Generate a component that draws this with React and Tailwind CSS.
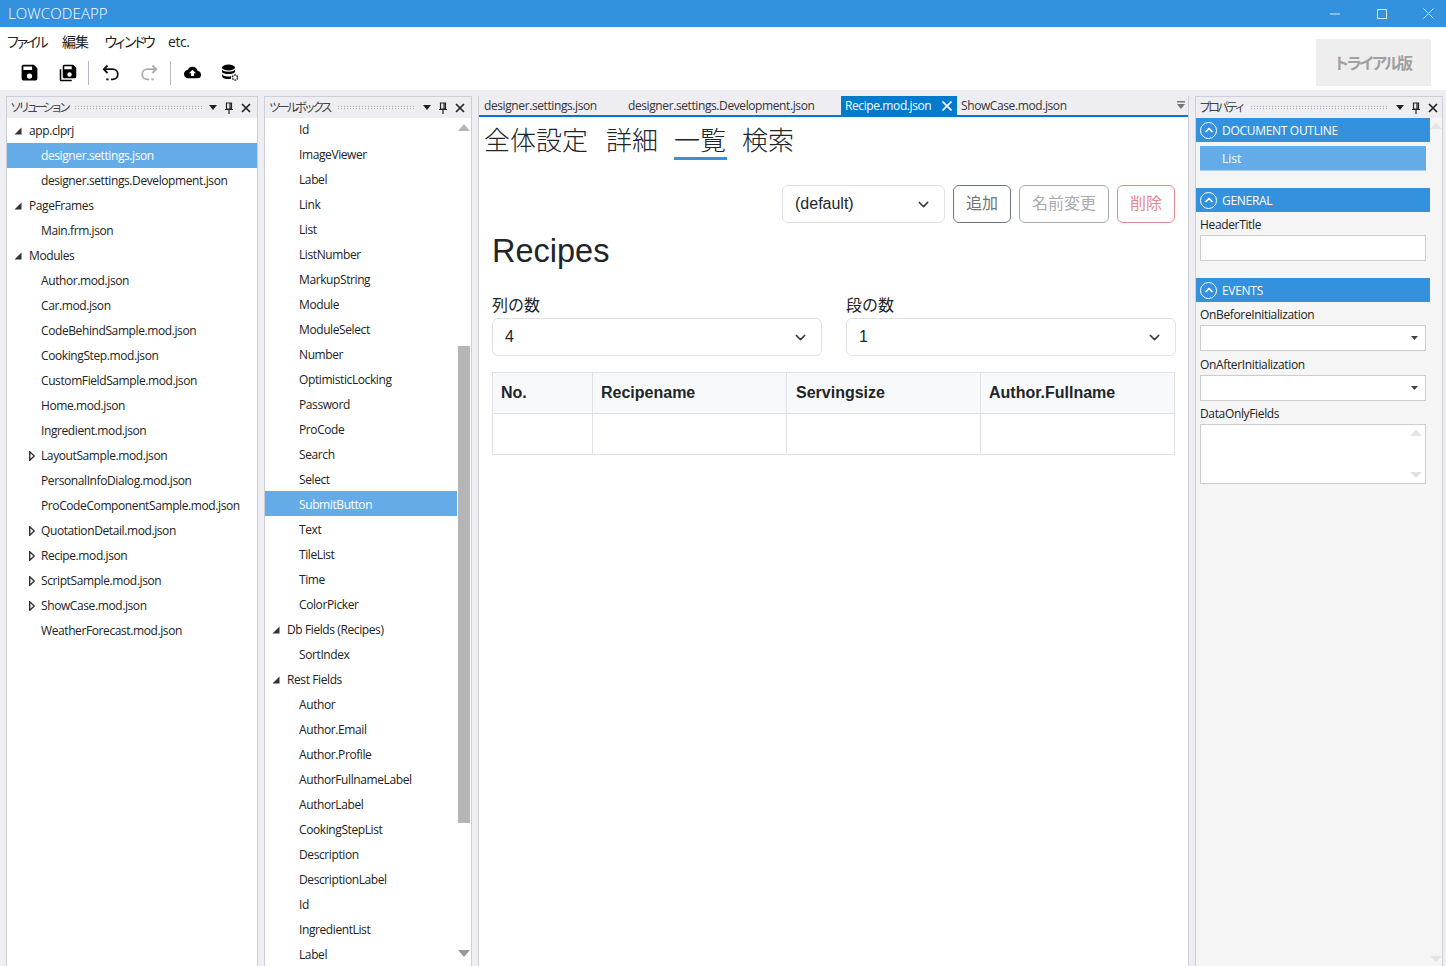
import { ChevronDown, ChevronUp } from 'lucide-react'

const uiFont = { fontFamily: '"Open Sans", "Noto Sans CJK JP", sans-serif' }

const solutionRows = [
  { label: 'app.clprj', level: 0, open: true },
  { label: 'designer.settings.json', level: 1, active: true },
  { label: 'designer.settings.Development.json', level: 1 },
  { label: 'PageFrames', level: 0, open: true },
  { label: 'Main.frm.json', level: 1 },
  { label: 'Modules', level: 0, open: true },
  { label: 'Author.mod.json', level: 1 },
  { label: 'Car.mod.json', level: 1 },
  { label: 'CodeBehindSample.mod.json', level: 1 },
  { label: 'CookingStep.mod.json', level: 1 },
  { label: 'CustomFieldSample.mod.json', level: 1 },
  { label: 'Home.mod.json', level: 1 },
  { label: 'Ingredient.mod.json', level: 1 },
  { label: 'LayoutSample.mod.json', level: 1, closed: true },
  { label: 'PersonalInfoDialog.mod.json', level: 1 },
  { label: 'ProCodeComponentSample.mod.json', level: 1 },
  { label: 'QuotationDetail.mod.json', level: 1, closed: true },
  { label: 'Recipe.mod.json', level: 1, closed: true },
  { label: 'ScriptSample.mod.json', level: 1, closed: true },
  { label: 'ShowCase.mod.json', level: 1, closed: true },
  { label: 'WeatherForecast.mod.json', level: 1 },
]

const toolboxRows = [
  'Id', 'ImageViewer', 'Label', 'Link', 'List', 'ListNumber', 'MarkupString', 'Module', 'ModuleSelect',
  'Number', 'OptimisticLocking', 'Password', 'ProCode', 'Search', 'Select', 'SubmitButton', 'Text',
  'TileList', 'Time', 'ColorPicker', '#Db Fields (Recipes)', 'SortIndex', '#Rest Fields', 'Author',
  'Author.Email', 'Author.Profile', 'AuthorFullnameLabel', 'AuthorLabel', 'CookingStepList', 'Description',
  'DescriptionLabel', 'Id', 'IngredientList', 'Label',
]

function OpenArrow() {
  return (
    <svg width="8" height="8" viewBox="0 0 8 8" className="shrink-0">
      <path d="M7.5 0.5V7.5H0.5Z" fill="#333" />
    </svg>
  )
}

function ClosedArrow() {
  return (
    <svg width="6" height="10" viewBox="0 0 6 10" className="shrink-0">
      <path d="M0.7 0.7L5.3 5L0.7 9.3Z" fill="#fff" stroke="#333" strokeWidth="1.4" />
    </svg>
  )
}

function PanelHeader({ title, titleClass, rightClass = 'pr-[6px]' }) {
  return (
    <div className={`h-[21px] shrink-0 bg-[#eeeef2] flex items-center pl-[3px] ${rightClass}`}>
      <span className={`text-[12px] text-[#444] whitespace-nowrap ${titleClass}`}>{title}</span>
      <div className="flex-1 h-[5px] mx-[7px] bg-[radial-gradient(#999_0.6px,transparent_0.7px)] bg-[length:3px_2.5px]" />
      <svg width="8" height="5" viewBox="0 0 8 5" className="mr-[8px]"><path d="M0 0H8L4 5Z" fill="#222" /></svg>
      <svg width="8" height="12" viewBox="0 0 8 12" className="mr-[8px]">
        <path d="M1.5 1H6.5V7H1.5ZM5 1V7M0 7.5H8M4 8V12" fill="none" stroke="#222" strokeWidth="1.2" />
      </svg>
      <svg width="10" height="10" viewBox="0 0 10 10"><path d="M1 1L9 9M9 1L1 9" stroke="#222" strokeWidth="1.7" /></svg>
    </div>
  )
}

function SolutionRow({ row }) {
  return (
    <div className={`h-[25px] flex items-center text-[12px] tracking-[-0.4px] ${row.active ? 'bg-[#64ace8] text-white' : 'text-[#222]'}`}>
      <span className={`shrink-0 flex items-center justify-end ${row.level === 0 ? 'w-[15px]' : 'w-[28px]'}`}>
        {row.open && <OpenArrow />}
        {row.closed && <ClosedArrow />}
      </span>
      <span className={row.level === 0 ? 'ml-[7px]' : 'ml-[6px]'}>{row.label}</span>
    </div>
  )
}

function ToolboxRow({ label }) {
  const group = label.startsWith('#')
  return (
    <div className={`h-[25px] pt-[2px] flex items-center text-[12px] tracking-[-0.4px] ${label === 'SubmitButton' ? 'bg-[#64ace8] text-white' : 'text-[#222]'}`}>
      {group ? (
        <>
          <span className="ml-[7px]"><OpenArrow /></span>
          <span className="ml-[7px]">{label.slice(1)}</span>
        </>
      ) : (
        <span className="ml-[34px]">{label}</span>
      )}
    </div>
  )
}

function SectionHeader({ title }) {
  return (
    <div className="h-[24px] bg-[#3391de] flex items-center pl-[4px] text-white text-[12px] tracking-[-0.3px]">
      <span className="w-[17px] h-[17px] rounded-full border-[1.5px] border-white flex items-center justify-center mr-[5px]">
        <ChevronUp size={12} strokeWidth={3.5} />
      </span>
      <span className="pt-[1px]">{title}</span>
    </div>
  )
}

function PropLabel({ children }) {
  return <div className="text-[12px] leading-[16px] text-[#222] tracking-[-0.35px] ml-[4px]">{children}</div>
}

function PropSelect() {
  return (
    <div className="mx-[4px] h-[26px] bg-white border border-[#ccc] flex items-center justify-end pr-[7px] mt-[2px]">
      <svg width="7" height="4" viewBox="0 0 7 4"><path d="M0 0H7L3.5 4Z" fill="#444" /></svg>
    </div>
  )
}

function WebSelect({ value, className }) {
  return (
    <div className={`h-[38px] bg-white border border-[#dee2e6] rounded-[6px] flex items-center justify-between pl-[12px] pr-[12px] text-[16px] text-[#212529] ${className}`}>
      <span>{value}</span>
      <ChevronDown size={17} strokeWidth={2} className="text-[#343a40]" />
    </div>
  )
}

function Mdi({ d, color = '#000', size = 21 }) {
  return (
    <svg width={size} height={size} viewBox="0 0 24 24"><path d={d} fill={color} /></svg>
  )
}

function UndoIcon({ flip, color }) {
  return (
    <svg width="18" height="18" viewBox="0 0 18 18" fill="none" stroke={color} strokeWidth="1.8" className={flip ? '-scale-x-100' : ''}>
      <path d="M5.5 1.5L1.8 5.2L5.5 9" />
      <path d="M2 5.2H10.5C13.6 5.2 15.8 7.4 15.8 10.3C15.8 13.2 13.6 15.4 10.5 15.4H9" />
      <path d="M4.2 15.4H6.6" />
    </svg>
  )
}

function DbIcon() {
  return (
    <svg width="18" height="18" viewBox="0 0 18 18">
      <ellipse cx="7.5" cy="3.5" rx="6.5" ry="3" fill="#000" />
      <path d="M1 5.5C2.5 8.5 12.5 8.5 14 5.5V8C12.5 10.8 2.5 10.8 1 8ZM1 10C2.5 12.8 9 13 10 12V14.8C7 15.5 2 15 1 12.5Z" fill="#000" />
      <circle cx="14" cy="13.5" r="2.6" fill="none" stroke="#333" strokeWidth="1.5" strokeDasharray="2 0.7" />
    </svg>
  )
}

function Sep() {
  return <div className="w-px h-[24px] bg-[#b4b8c4]" />
}

export default function App() {
  return (
    <div className="w-[1446px] h-[966px] overflow-hidden bg-[#eeeef2] flex flex-col" style={uiFont}>
      {/* Title bar */}
      <div className="h-[27px] shrink-0 bg-[#3391de] flex items-center pl-[8px] text-white">
        <span className="text-[15px] font-light tracking-[0.1px]">LOWCODEAPP</span>
        <div className="ml-auto flex items-center">
          <svg width="10" height="2" viewBox="0 0 10 2" className="mr-[37px]"><path d="M0 1H10" stroke="#d9ecfb" /></svg>
          <svg width="10" height="10" viewBox="0 0 10 10" className="mr-[36px]"><path d="M.5.5H9.5V9.5H.5Z" stroke="#d9ecfb" fill="none" /></svg>
          <svg width="11" height="11" viewBox="0 0 11 11" className="mr-[12px]"><path d="M.5.5L10.5 10.5M10.5.5L.5 10.5" stroke="#d9ecfb" /></svg>
        </div>
      </div>

      {/* Menu and toolbar */}
      <div className="h-[63px] shrink-0 bg-white flex">
        <div className="flex-1 flex flex-col">
          <div className="h-[30px] flex items-center pl-[6px] pb-[1px] text-[14px] text-[#222] whitespace-nowrap">
            <span className="w-[56px] tracking-[-4.4px]">ファイル</span>
            <span className="w-[42px] tracking-[-1px]">編集</span>
            <span className="w-[64px] tracking-[-4.4px]">ウィンドウ</span>
            <span className="tracking-[-0.4px]">etc.</span>
          </div>
          <div className="flex-1 flex items-center pl-[4px] pb-[2px]">
            <div className="w-[4px] h-[24px] bg-[radial-gradient(#bbb_0.6px,transparent_0.7px)] bg-[length:2px_2px]" />
            <span className="ml-[11px] flex"><Mdi d="M15,9H5V5H15M12,19A3,3 0 0,1 9,16A3,3 0 0,1 12,13A3,3 0 0,1 15,16A3,3 0 0,1 12,19M17,3H5C3.89,3 3,3.9 3,5V19A2,2 0 0,0 5,21H19A2,2 0 0,0 21,19V7L17,3Z" /></span>
            <span className="ml-[19px] flex"><Mdi size={18} d="M17,7V3H7V7H17M14,17A3,3 0 0,0 17,14A3,3 0 0,0 14,11A3,3 0 0,0 11,14A3,3 0 0,0 14,17M19,1L23,5V17A2,2 0 0,1 21,19H7C5.89,19 5,18.1 5,17V3A2,2 0 0,1 7,1H19M1,7H3V21H17V23H3A2,2 0 0,1 1,21V7Z" /></span>
            <span className="ml-[11px]"><Sep /></span>
            <span className="ml-[13px] flex"><UndoIcon color="#111" /></span>
            <span className="ml-[20px] flex"><UndoIcon flip color="#aaa" /></span>
            <span className="ml-[12px]"><Sep /></span>
            <span className="ml-[13px] flex"><Mdi size={17} d="M14,13V17H10V13H7L12,8L17,13M19.35,10.03C18.67,6.59 15.64,4 12,4C9.11,4 6.6,5.64 5.35,8.03C2.34,8.36 0,10.9 0,14A6,6 0 0,0 6,20H19A5,5 0 0,0 24,15C24,12.36 21.95,10.22 19.35,10.03Z" /></span>
            <span className="ml-[20px] flex"><DbIcon /></span>
          </div>
        </div>
        <div className="w-[115px] h-[47px] mt-[12px] mr-[15px] pr-[4px] bg-[#eeeeee] flex items-center justify-center text-[16px] font-bold text-[#a0a0a0] tracking-[-3.2px] whitespace-nowrap">
          トライアル版
        </div>
      </div>

      {/* Docked panels */}
      <div className="flex-1 min-h-0 flex pt-[6px] pl-[6px] pr-[3px] gap-[6px]">
        <div className="w-[252px] shrink-0 border-x border-t border-[#ccced8] bg-white flex flex-col overflow-hidden">
          <PanelHeader title="ソリューション" titleClass="tracking-[-3.8px]" />
          <div>
            {solutionRows.map(row => <SolutionRow key={row.label} row={row} />)}
          </div>
        </div>

        <div className="w-[208px] shrink-0 border-x border-t border-[#ccced8] bg-white flex flex-col overflow-hidden">
          <PanelHeader title="ツールボックス" titleClass="ml-px tracking-[-3.3px]" />
          <div className="flex-1 min-h-0 flex">
            <div className="w-[192px] shrink-0 -mt-[2px]">
              {toolboxRows.map((label, i) => <ToolboxRow key={i} label={label} />)}
            </div>
            <div className="w-[14px] shrink-0 flex flex-col items-center">
              <svg width="12" height="7" viewBox="0 0 12 7" className="mt-[6px]"><path d="M6 0L12 7H0Z" fill="#b5b5b5" /></svg>
              <div className="w-[12px] h-[477px] mt-[215px] -ml-[1px] bg-[#b5b5b5]" />
              <svg width="12" height="7" viewBox="0 0 12 7" className="mt-[127px]"><path d="M0 0H12L6 7Z" fill="#999" /></svg>
            </div>
          </div>
        </div>

        <div className="w-[711px] shrink-0 border-r border-l border-[#ccced8] bg-white flex flex-col overflow-hidden">
          {/* Document tabs */}
          <div className="h-[21px] shrink-0 bg-[#eeeef2] border-b-2 border-[#007acc] flex text-[12px] text-[#333] tracking-[-0.4px]">
            <span className="w-[149px] pl-[5px] pt-[1px]">designer.settings.json</span>
            <span className="w-[213px] pt-[1px]">designer.settings.Development.json</span>
            <span className="w-[116px] h-[19px] bg-[#007acc] text-white flex items-center pl-[4px]">
              Recipe.mod.json
              <svg width="10" height="10" viewBox="0 0 10 10" className="ml-auto mr-[5px]"><path d="M.5.5L9.5 9.5M9.5.5L.5 9.5" stroke="#fff" strokeWidth="1.6" /></svg>
            </span>
            <span className="pl-[4px] pt-[1px]">ShowCase.mod.json</span>
            <svg width="10" height="8" viewBox="0 0 10 8" className="ml-auto mr-[2px] mt-[5px]"><path d="M1 0H9V1.5H1ZM1 3H9L5 8Z" fill="#777" /></svg>
          </div>

          <div className="flex-1 pl-[5px] pr-[13px]" style={{ fontFamily: '"Liberation Sans", "Noto Sans CJK JP", sans-serif' }}>
            <div className="flex text-[26px] leading-[40px] font-light text-[#212529] h-[43px] pt-[4px] whitespace-nowrap">
              <span className="w-[122px]">全体設定</span>
              <span className="w-[68px]">詳細</span>
              <span className="w-[68px]">
                <span className="block w-[53px] h-[39px] border-b-[3px] border-[#3391de]">一覧</span>
              </span>
              <span>検索</span>
            </div>

            <div className="pl-[8px]">
              <div className="flex justify-end gap-[8px] mt-[25px] text-[16px]">
                <WebSelect value="(default)" className="w-[163px]" />
                <div className="h-[38px] w-[58px] rounded-[6px] border border-[#6c757d] text-[#6c757d] flex items-center justify-center">追加</div>
                <div className="h-[38px] w-[90px] rounded-[6px] border border-[#a7abaf] text-[#a7abaf] flex items-center justify-center">名前変更</div>
                <div className="h-[38px] w-[58px] rounded-[6px] border border-[#e4888f] text-[#e4888f] flex items-center justify-center">削除</div>
              </div>

              <h2 className="text-[32.5px] leading-[38px] text-[#212529] mt-[9px]">Recipes</h2>

              <div className="grid grid-cols-[330px_330px] gap-[24px] mt-[24px] text-[16px] text-[#212529]">
                <div>
                  <div className="h-[24px] leading-[24px]">列の数</div>
                  <WebSelect value="4" />
                </div>
                <div>
                  <div className="h-[24px] leading-[24px]">段の数</div>
                  <WebSelect value="1" />
                </div>
              </div>

              <table className="mt-[16px] w-[683px] table-fixed border-collapse text-[16px] text-[#212529]">
                <thead>
                  <tr className="h-[41px] bg-[#f8f9fa] font-bold text-left">
                    <th className="w-[100px] border border-[#dee2e6] px-[8px]">No.</th>
                    <th className="w-[194px] border border-[#dee2e6] px-[8px]">Recipename</th>
                    <th className="w-[194px] border border-[#dee2e6] px-[9px]">Servingsize</th>
                    <th className="border border-[#dee2e6] px-[8px]">Author.Fullname</th>
                  </tr>
                </thead>
                <tbody>
                  <tr className="h-[41px]">
                    <td className="border border-[#dee2e6]" />
                    <td className="border border-[#dee2e6]" />
                    <td className="border border-[#dee2e6]" />
                    <td className="border border-[#dee2e6]" />
                  </tr>
                </tbody>
              </table>
            </div>
          </div>
        </div>

        <div className="w-[248px] shrink-0 border-x border-t border-[#ccced8] bg-[#f5f5f5] flex flex-col overflow-hidden">
          <PanelHeader title="プロパティ" titleClass="tracking-[-3px]" rightClass="pr-[4px]" />
          <div className="flex-1 min-h-0 flex">
            <div className="w-[234px] shrink-0">
              <SectionHeader title="DOCUMENT OUTLINE" />
              <div className="mx-[4px] mt-[4px] h-[25px] bg-[#64ace8] border-b border-[#a4d0f3] text-white text-[12px] flex items-center pl-[22px] pt-[1px]">List</div>

              <div className="mt-[17px]"><SectionHeader title="GENERAL" /></div>
              <div className="mt-[5px]"><PropLabel>HeaderTitle</PropLabel></div>
              <div className="mx-[4px] mt-[2px] h-[26px] bg-white border border-[#ccc]" />

              <div className="mt-[17px]"><SectionHeader title="EVENTS" /></div>
              <div className="mt-[5px]"><PropLabel>OnBeforeInitialization</PropLabel></div>
              <PropSelect />
              <div className="mt-[6px]"><PropLabel>OnAfterInitialization</PropLabel></div>
              <PropSelect />
              <div className="mt-[5px]"><PropLabel>DataOnlyFields</PropLabel></div>
              <div className="mx-[4px] mt-[2px] h-[60px] bg-white border border-[#ccc] flex flex-col items-end justify-between py-[5px] pr-[3px]">
                <svg width="12" height="6" viewBox="0 0 12 6"><path d="M6 0L12 6H0Z" fill="#e4e4e4" /></svg>
                <svg width="12" height="6" viewBox="0 0 12 6"><path d="M0 0H12L6 6Z" fill="#e4e4e4" /></svg>
              </div>
            </div>
            <div className="flex-1 flex flex-col items-center justify-between pt-[5px] pb-[4px]">
              <svg width="12" height="6" viewBox="0 0 12 6"><path d="M6 0L12 6H0Z" fill="#e4e4e4" /></svg>
              <svg width="12" height="6" viewBox="0 0 12 6"><path d="M0 0H12L6 6Z" fill="#e4e4e4" /></svg>
            </div>
          </div>
        </div>
      </div>
    </div>
  )
}
